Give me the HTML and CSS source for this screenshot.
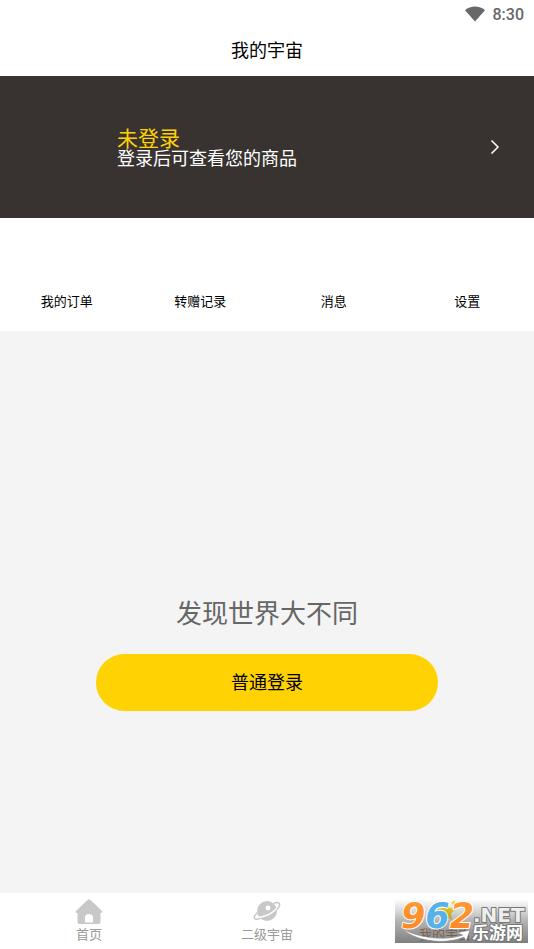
FILE: index.html
```html
<!DOCTYPE html>
<html lang="zh-CN">
<head>
<meta charset="utf-8">
<meta name="viewport" content="width=device-width, initial-scale=1">
<title>我的宇宙</title>
<link rel="stylesheet" href="styles.css">
</head>
<body>
<div class="app">
  <div class="status">
    <svg class="wifi" viewBox="0 0 20 16" aria-hidden="true"><path d="M0 4.200C5.500-.8 14.500-.8 20 4.200L10 15.500Z"/></svg>
    <span>8:30</span>
  </div>
  <header class="title"><h1>我的宇宙</h1></header>
  <a class="profile" href="#">
    <span class="profile-text">
      <strong>未登录</strong>
      <span>登录后可查看您的商品</span>
    </span>
    <svg class="chevron" viewBox="0 0 10 16" aria-hidden="true"><path d="M1.500 1.500L8 8L1.500 14.500"/></svg>
  </a>
  <nav class="shortcuts">
    <a href="#">我的订单</a>
    <a href="#">转赠记录</a>
    <a href="#">消息</a>
    <a href="#">设置</a>
  </nav>
  <main class="content">
    <p>发现世界大不同</p>
    <button type="button">普通登录</button>
  </main>
  <nav class="tabs">
    <a href="#">
      <svg viewBox="0 0 28 26" aria-hidden="true"><path fill="#c8c8c8" fill-rule="evenodd" d="M12.500 1Q14-.3 15.500 1L26.500 11.500Q28.500 14 25.500 14H25.500V22.500Q25.500 25 23 25H5Q2.500 25 2.500 22.500V14H2.500Q-.5 14 1.500 11.500ZM10 23.500H18V18.500Q18 15 14 15T10 18.500Z"/></svg>
      <span>首页</span>
    </a>
    <a href="#">
      <svg viewBox="0 0 28 26" aria-hidden="true"><circle cx="14" cy="12" r="10" fill="#c8c8c8"/><path d="M4.500 13.500C0 18 0 21 5 20C13 18.500 23 12.500 26 8C28 4 25 2.500 20.500 4.500" fill="none" stroke="#c8c8c8" stroke-width="1.500"/><path d="M5.500 18.500C12 17.500 20 14 24 9" fill="none" stroke="#fff" stroke-width="1.300"/><circle cx="15" cy="9" r="2.400" fill="#fff"/></svg>
      <span>二级宇宙</span>
    </a>
    <a href="#" class="active">
      <svg viewBox="0 0 28 26" aria-hidden="true"><path fill="#ffd204" d="M16 3L18.500 9L25 10L20 14.500L21 21L15 18L9 21L10.500 14L6 10L13 9ZM5 2L6 4L8 5L6 6L5 8L4 6L2 5L4 4ZM23 1L24 3L26 4L24 5L23 7L22 5L20 4L22 3Z"/></svg>
      <span>我的宇宙</span>
    </a>
  </nav>
  <svg class="brand" viewBox="0 0 133 44" role="img" aria-label="962.NET 乐游网">
    <defs>
      <linearGradient id="shade" x1="0" y1="0" x2="0" y2="1"><stop offset="0" stop-color="#777" stop-opacity="0"/><stop offset=".5" stop-color="#666" stop-opacity=".5"/><stop offset="1" stop-color="#555" stop-opacity=".75"/></linearGradient>
      <linearGradient id="orange" x1="0" y1="0" x2="0" y2="1"><stop offset="0" stop-color="#ff9c35"/><stop offset="1" stop-color="#ff8420"/></linearGradient>
    </defs>
    <rect width="133" height="44" fill="url(#shade)"/>
    <path d="M6 29C20 38 49 43 68 36L62 34L75 31L71 42L69 38C47 47 19 41 6 29Z" fill="#fff" stroke="#888" stroke-width=".5"/>
    <text class="digits" x="6" y="29"><tspan fill="url(#orange)">9</tspan><tspan fill="#55b2e8">6</tspan><tspan fill="url(#orange)">2</tspan></text>
    <text class="domain" x="78" y="23">.NET</text>
    <text class="site" x="77" y="40">乐游网</text>
  </svg>
</div>
</body>
</html>
```
FILE: styles.css
```css
* { box-sizing: border-box; }
body {
  margin: 0;
  font-family: Roboto, "Noto Sans CJK SC", sans-serif;
  color: #000;
  background: #fff;
}
a { color: inherit; text-decoration: none; }
.app {
  position: relative;
  display: flex;
  flex-direction: column;
  min-height: 100vh;
}
.status {
  display: flex;
  align-items: center;
  justify-content: flex-end;
  gap: 8px;
  height: 28px;
  padding: 0 10px;
  font-size: 16px;
  font-weight: 500;
  color: #686868;
}
.wifi { width: 20px; height: 16px; fill: #686868; }
.title {
  display: flex;
  align-items: center;
  justify-content: center;
  height: 48px;
  padding-bottom: 2px;
}
.title h1 { margin: 0; font-size: 18px; line-height: 24px; font-weight: 400; }
.profile {
  display: flex;
  align-items: center;
  justify-content: space-between;
  height: 142px;
  padding: 0 34px 0 117px;
  background: #383330;
  color: #fff;
}
.profile-text {
  display: flex;
  flex-direction: column;
  padding-top: 4px;
  font-size: 18px;
  line-height: 20px;
}
.profile-text strong { font-size: 21px; font-weight: 400; color: #ffd204; }
.chevron { width: 10px; height: 16px; fill: none; stroke: #fff; stroke-width: 1.500; }
.shortcuts {
  display: grid;
  grid-template-columns: repeat(4, 1fr);
  align-items: end;
  height: 113px;
  padding-bottom: 19px;
  font-size: 13px;
  line-height: 20px;
  text-align: center;
}
.content {
  flex: 1;
  display: flex;
  flex-direction: column;
  align-items: center;
  justify-content: flex-end;
  padding-bottom: 182px;
  background: #f4f4f4;
}
.content p { margin: 0 0 22px; font-size: 26px; line-height: 36px; color: #666; }
.content button {
  width: 64%;
  height: 57px;
  padding: 0 0 4px;
  border: 0;
  border-radius: 29px;
  background: #ffd204;
  color: #000;
  font: inherit;
  font-size: 18px;
}
.tabs {
  display: grid;
  grid-template-columns: repeat(3, 1fr);
  height: 56px;
  padding-top: 6px;
  font-size: 13px;
  line-height: 20px;
  color: #999;
}
.tabs a { display: flex; flex-direction: column; align-items: center; }
.tabs svg { width: 28px; height: 26px; }
.tabs .active { color: #b8692a; }
.brand {
  position: absolute;
  right: 6px;
  bottom: 6px;
  width: 133px;
  height: 44px;
  overflow: visible;
}
.brand text { paint-order: stroke; stroke-linejoin: round; }
.digits { font: italic bold 35px "DejaVu Sans", sans-serif; stroke: #fff; stroke-width: 2px; }
.domain { font: bold 20px "DejaVu Sans", sans-serif; fill: #eee; stroke: #777; stroke-width: 2px; }
.site { font: bold 17px "Noto Sans CJK SC", sans-serif; fill: #fff; stroke: #777; stroke-width: 2px; }
```
